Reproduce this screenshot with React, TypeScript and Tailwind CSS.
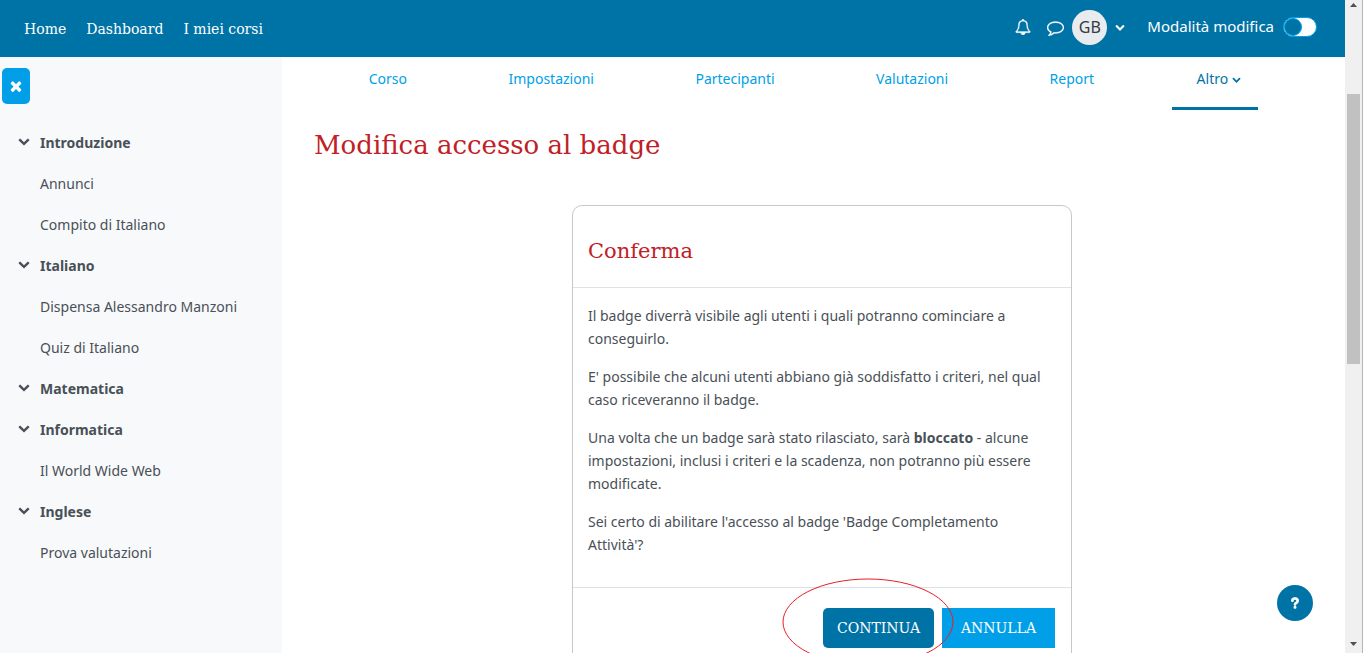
import type { ReactNode } from "react";
import { FaQuestion } from "react-icons/fa6";

const slab = "font-['DejaVu_Serif',serif]";

function Glyph({ d, className }: { d: string; className: string }) {
  return (
    <svg viewBox="0 0 1792 1792" fill="currentColor" aria-hidden="true" className={className}>
      <path d={d} />
    </svg>
  );
}

const chevron =
  "M1683 808l-742 741q-19 19-45 19t-45-19l-742-741q-19-19-19-45.5t19-45.5l166-165q19-19 45-19t45 19l531 531 531-531q19-19 45-19t45 19l166 165q19 19 19 45.5t-19 45.5z";
const times =
  "M1490 1322q0 40-28 68l-136 136q-28 28-68 28t-68-28l-294-294-294 294q-28 28-68 28t-68-28l-136-136q-28-28-28-68t28-68l294-294-294-294q-28-28-28-68t28-68l136-136q28-28 68-28t68 28l294 294 294-294q28-28 68-28t68 28l136 136q28 28 28 68t-28 68l-294 294 294 294q28 28 28 68z";
const bell =
  "M912 1696q0-16-16-16-59 0-101.5-42.5t-42.5-101.5q0-16-16-16t-16 16q0 73 51.5 124.5t124.5 51.5q16 0 16-16zm-666-288h1300q-266-300-266-832 0-51-24-105t-69-103-121.5-80.5-169.5-31.5-169.5 31.5-121.5 80.5-69 103-24 105q0 532-266 832zm1482 0q0 52-38 90t-90 38h-448q0 106-75 181t-181 75-181-75-75-181h-448q-52 0-90-38t-38-90q50-42 91-88t85-119.5 74.5-158.5 50-206 19.5-260q0-152 117-282.5t307-158.5q-8-19-8-39 0-40 28-68t68-28 68 28 28 68q0 20-8 39 190 28 307 158.5t117 282.5q0 139 19.5 260t50 206 74.5 158.5 85 119.5 91 88z";
const comment =
  "M896 384q-204 0-381.5 69.5t-282 187.5-104.5 255q0 112 71.5 213.5t201.5 175.5l87 50-27 96q-24 91-70 172 152-63 275-171l43-38 57 6q69 8 130 8 204 0 381.5-69.5t282-187.5 104.5-255-104.5-255-282-187.5-381.5-69.5zm896 512q0 174-120 321.5t-326 233-450 85.5q-70 0-145-8-198 175-460 242-49 14-114 22h-5q-15 0-27-10.5t-16-27.5v-1q-3-4-.5-12t2-10 4.5-9.5l6-9 7-8.5 8-9q7-8 31-34.5t34.5-38 31-39.5 32.5-51 27-59 26-76q-157-89-247.5-220t-90.5-281q0-174 120-321.5t326-233 450-85.5 450 85.5 326 233 120 321.5z";

const sections = [
  { title: "Introduzione", items: ["Annunci", "Compito di Italiano"] },
  { title: "Italiano", items: ["Dispensa Alessandro Manzoni", "Quiz di Italiano"] },
  { title: "Matematica", items: [] },
  { title: "Informatica", items: ["Il World Wide Web"] },
  { title: "Inglese", items: ["Prova valutazioni"] },
];

function Header() {
  return (
    <header className="flex h-[57px] shrink-0 items-center justify-between bg-[#0073a6] pr-7 pl-6 text-white">
      <nav className={`flex gap-5 text-sm ${slab}`}>
        <a href="#home">Home</a>
        <a href="#dashboard">Dashboard</a>
        <a href="#corsi">I miei corsi</a>
      </nav>
      <div className="flex h-[54px] items-center self-start">
        <button aria-label="Notifiche" className="mr-4">
          <Glyph d={bell} className="size-4 stroke-current stroke-[30]" />
        </button>
        <button aria-label="Messaggi" className="mr-2">
          <Glyph d={comment} className="size-[17px] stroke-current stroke-[30]" />
        </button>
        <button aria-label="Menu utente" className="mr-[22px] flex items-center gap-2">
          <span className="flex size-[35px] items-center justify-center rounded-full bg-[#e9ecef] text-base text-[#343a40]">
            GB
          </span>
          <Glyph d={chevron} className="size-[10px]" />
        </button>
        <label className="flex items-center gap-[9px] text-[15px]">
          Modalità modifica
          <input
            type="checkbox"
            role="switch"
            className="h-5 w-[34px] appearance-none rounded-full border border-[#009fe8] bg-white before:block before:size-[18px] before:rounded-full before:border before:border-[#009fe8] before:bg-[#0073a6]"
          />
        </label>
      </div>
    </header>
  );
}

function Sidebar() {
  return (
    <aside className="w-[282px] shrink-0 bg-[#f8f9fb] pt-[11px] text-[#495057]">
      <button
        aria-label="Chiudi indice del corso"
        className="ml-[2px] flex h-9 w-7 items-center justify-center rounded-[5px] bg-[#009fe8] text-white"
      >
        <Glyph d={times} className="size-4" />
      </button>
      <ul className="mt-[18px]">
        {sections.map((s) => (
          <li key={s.title}>
            <button className="flex h-[41px] w-full items-center gap-[10px] pl-[18px] font-bold">
              <Glyph d={chevron} className="mb-[3px] size-[12px]" />
              {s.title}
            </button>
            <ul>
              {s.items.map((i) => (
                <li key={i} className="flex h-[41px] items-center pl-10">
                  <a href="#attivita">{i}</a>
                </li>
              ))}
            </ul>
          </li>
        ))}
      </ul>
    </aside>
  );
}

function Tab({ children, active = false }: { children: ReactNode; active?: boolean }) {
  return (
    <a
      href="#tab"
      className={`flex h-[53px] items-start gap-1 border-b-[3px] pt-3 leading-5 ${
        active ? "border-[#0073a6] pr-[17px] pl-[25px] text-[#0073a6]" : "border-transparent px-6 text-[#009fe8]"
      }`}
    >
      {children}
    </a>
  );
}

function ConfirmCard() {
  return (
    <section className="relative mx-auto mt-[42px] w-[500px] rounded-[10px] border border-[#c8c8c8]">
      <h2 className={`flex h-[82px] items-center border-b border-[#dee2e6] px-[15px] pt-2 text-[21px] text-[#c02026] ${slab}`}>
        Conferma
      </h2>
      <div className="border-b border-[#dee2e6] px-[15px] py-4 leading-[23px] [&>p]:mb-[15px]">
        <p>Il badge diverrà visibile agli utenti i quali potranno cominciare a conseguirlo.</p>
        <p>E' possibile che alcuni utenti abbiano già soddisfatto i criteri, nel qual caso riceveranno il badge.</p>
        <p>
          Una volta che un badge sarà stato rilasciato, sarà <strong>bloccato</strong> - alcune impostazioni, inclusi i
          criteri e la scadenza, non potranno più essere modificate.
        </p>
        <p>Sei certo di abilitare l'accesso al badge 'Badge Completamento Attività'?</p>
      </div>
      <div className={`flex justify-end gap-2 px-4 py-5 text-sm text-white ${slab}`}>
        <button className="h-10 w-[111px] rounded-[5px] bg-[#0073a6]">CONTINUA</button>
        <button className="h-10 w-[113px] bg-[#009fe8]">ANNULLA</button>
      </div>
      <svg
        viewBox="0 0 172 88"
        fill="none"
        aria-hidden="true"
        className="pointer-events-none absolute right-[117px] bottom-[2px] h-[88px] w-[172px]"
      >
        <ellipse cx="86" cy="44" rx="85" ry="43" stroke="#ed1c24" strokeWidth="1" />
      </svg>
    </section>
  );
}

export default function App() {
  return (
    <div className="flex h-screen overflow-hidden bg-white font-['Noto_Sans','Open_Sans',sans-serif] text-sm text-[#495057]">
      <div className="flex min-w-0 flex-1 flex-col">
        <Header />
        <div className="flex min-h-0 flex-1">
          <Sidebar />
          <main className="relative min-w-0 flex-1 overflow-hidden pr-[15px] pl-8">
            <nav className="mr-[45px] ml-1 flex justify-around">
              <Tab>Corso</Tab>
              <Tab>Impostazioni</Tab>
              <Tab>Partecipanti</Tab>
              <Tab>Valutazioni</Tab>
              <Tab>Report</Tab>
              <Tab active>
                Altro
                <Glyph d={chevron} className="mt-[6px] size-[9px]" />
              </Tab>
            </nav>
            <h1 className={`mt-[17px] text-[26px] leading-9 text-[#c02026] ${slab}`}>Modifica accesso al badge</h1>
            <ConfirmCard />
            <button
              aria-label="Aiuto"
              className="absolute right-8 bottom-8 flex size-9 items-center justify-center rounded-full bg-[#0073a6] text-white"
            >
              <FaQuestion className="size-3 stroke-current stroke-[50]" />
            </button>
          </main>
        </div>
      </div>
      <div aria-hidden="true" className="flex w-[18px] shrink-0 flex-col items-center border-r border-[#b5b5b5] bg-[#f0f0f0] text-[#505050]">
        <svg viewBox="0 0 7 4" fill="currentColor" className="mt-[3px] h-1 w-[7px]">
          <path d="M0 4L3.500 0L7 4z" />
        </svg>
        <div className="mt-[87px] h-[270px] w-[13px] bg-[#c1c1c1]" />
        <svg viewBox="0 0 7 4" fill="currentColor" className="mt-auto mb-[7px] h-1 w-[7px]">
          <path d="M0 0L3.500 4L7 0z" />
        </svg>
      </div>
    </div>
  );
}
